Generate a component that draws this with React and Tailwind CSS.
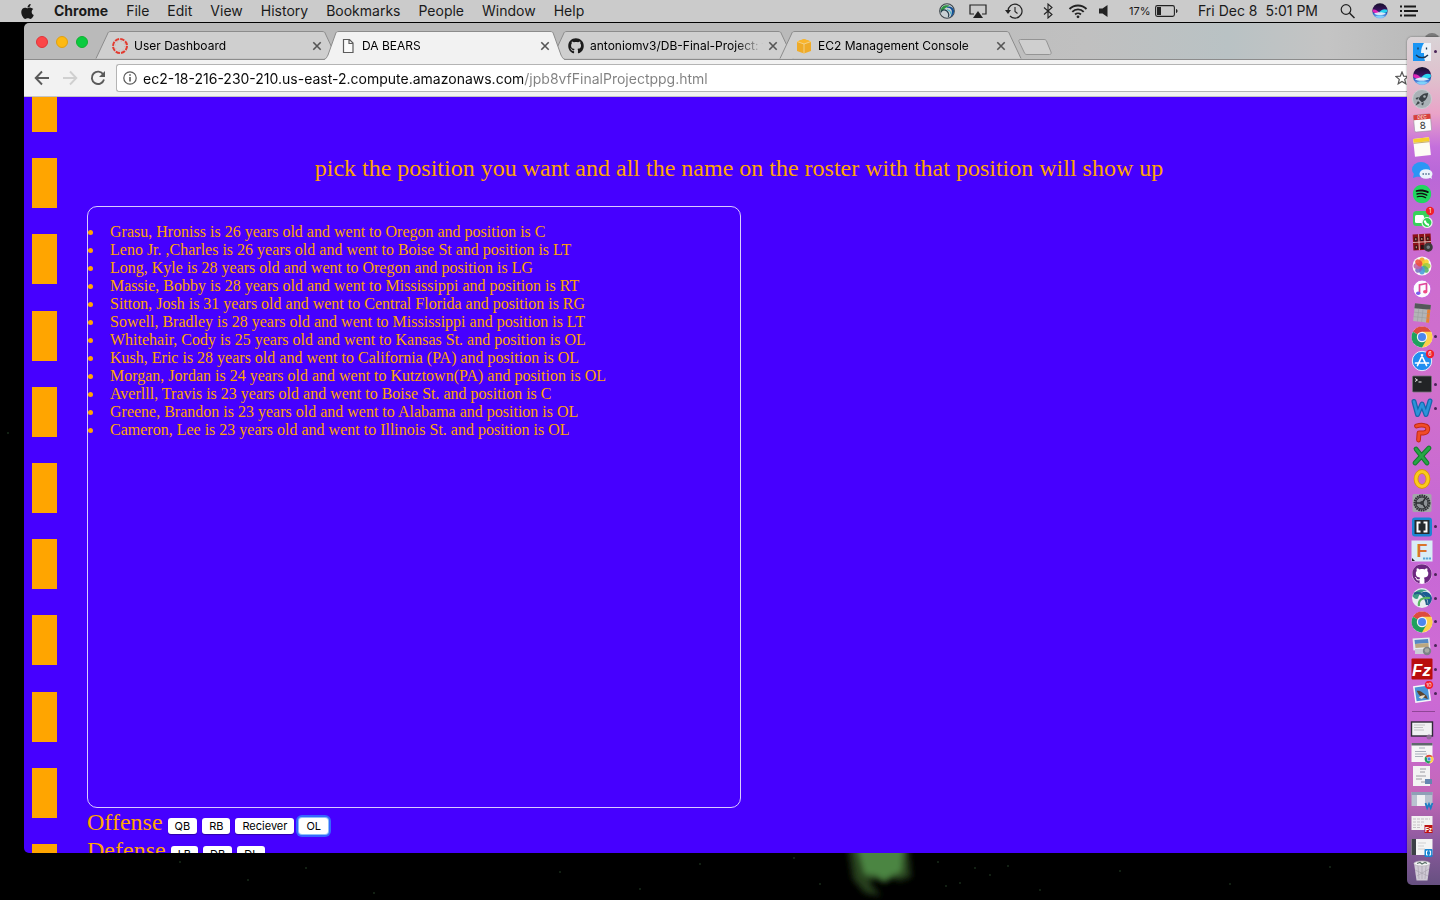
import React from "react";
import { FaApple, FaGithub, FaSpotify } from "react-icons/fa";

const menus = ["File", "Edit", "View", "History", "Bookmarks", "People", "Window", "Help"];

const roster = [
  "Grasu, Hroniss is 26 years old and went to Oregon and position is C",
  "Leno Jr. ,Charles is 26 years old and went to Boise St and position is LT",
  "Long, Kyle is 28 years old and went to Oregon and position is LG",
  "Massie, Bobby is 28 years old and went to Mississippi and position is RT",
  "Sitton, Josh is 31 years old and went to Central Florida and position is RG",
  "Sowell, Bradley is 28 years old and went to Mississippi and position is LT",
  "Whitehair, Cody is 25 years old and went to Kansas St. and position is OL",
  "Kush, Eric is 28 years old and went to California (PA) and position is OL",
  "Morgan, Jordan is 24 years old and went to Kutztown(PA) and position is OL",
  "Averlll, Travis is 23 years old and went to Boise St. and position is C",
  "Greene, Brandon is 23 years old and went to Alabama and position is OL",
  "Cameron, Lee is 23 years old and went to Illinois St. and position is OL",
];

function SiriArt() {
  return (
    <g>
      <defs>
        <linearGradient id="siriBg" x1="0" y1="0" x2="0" y2="1">
          <stop offset="0" stopColor="#15102c" />
          <stop offset=".45" stopColor="#3a1260" />
          <stop offset=".7" stopColor="#2a6fd0" />
          <stop offset="1" stopColor="#a9b8f0" />
        </linearGradient>
      </defs>
      <circle cx="12" cy="12" r="11.5" fill="url(#siriBg)" />
      <path d="M1 10c4-1 7 1 10 5-3 1-7 0-10-2z" fill="#e026b8" />
      <path d="M23 10c-5-2-9 0-12 4 4 2 9 1 12-1z" fill="#29d3ee" />
      <path d="M3 16c5-3 13-3 18 0-3 2-14 3-18 0z" fill="#e9f6ff" opacity=".9" />
      <path d="M5 20c4-2 10-2 14 0-3 3-11 3-14 0z" fill="#7fe0ff" opacity=".8" />
    </g>
  );
}

function Globe({ className }) {
  return (
    <svg viewBox="0 0 24 24" className={className}>
      <circle cx="12" cy="12" r="11" fill="#c9d0d4" stroke="#3c444a" strokeWidth="1.600" />
      <path d="M2.500 12C3 5 9 2 16 4c-3 2-6 2-8 5-2 2-2 4-5.500 3z" fill="#2c9440" />
      <path d="M11 7c7 0 9 3 8 8 0 2-1 4-2 6 4-2 6-6 5.500-10C20 5 15 4 11 7z" fill="#124f93" />
      <path d="M3 14c1-5 8-5 11 1 1 2 1 4 0 6" fill="none" stroke="#27404e" strokeWidth="1.800" />
      <path d="M12 10c3 0 6 3 6 7" fill="none" stroke="#38b0c8" strokeWidth="1.600" />
    </svg>
  );
}

function Chrome() {
  return (
    <g>
      <circle cx="12" cy="12" r="10.5" fill="#fff" />
      <path d="M12 12L2.9 6.8A10.5 10.5 0 0 1 21.1 6.8z" fill="#dd4b3e" />
      <path d="M12 12l9.1-5.2A10.5 10.5 0 0 1 12 22.5z" fill="#fdd04b" />
      <path d="M12 12v10.5A10.5 10.5 0 0 1 2.9 6.8z" fill="#1fa15d" />
      <path d="M12 6.800h9.100L16.500 14.600z" fill="#fdd04b" />
      <path d="M16.500 14.600L12 22.500 7.500 14.600z" fill="#1fa15d" />
      <circle cx="12" cy="12" r="5.200" fill="#f4f4f4" />
      <circle cx="12" cy="12" r="4" fill="#4b87ee" />
    </g>
  );
}

function Badge({ children }) {
  return (
    <g>
      <circle cx="20" cy="5" r="4.200" fill="#f0202c" />
      <text x="20" y="7" fontSize="5.500" textAnchor="middle" fill="#fff" fontFamily="Inter, sans-serif">{children}</text>
    </g>
  );
}

const petals = ["#f7a12b", "#f6d12f", "#a5cc3b", "#55b46b", "#4a9fd8", "#7d6fc4", "#c264a8", "#ee5140"];

const apps = [
  { name: "Finder", open: true, art: (
    <g>
      <rect x="3" y="3" width="18" height="18" fill="#eef3f9" />
      <path d="M3 3h11c-2 3-3 6-3 10h3c0 3 0 5 1 8H3z" fill="#1a95f4" />
      <path d="M8 7.500v2M16.500 7.500v2M6 15c3 3.500 9 3.500 12 0" fill="none" stroke="#1d3550" strokeWidth="1.300" />
    </g>) },
  { name: "Siri", art: <g transform="translate(2.500 2.500) scale(.8)"><SiriArt /></g> },
  { name: "Launchpad", art: (
    <g>
      <circle cx="12" cy="12" r="9.500" fill="#a9b1b6" stroke="#c9ced2" />
      <path d="M18 6c-5 0-8 3-9.500 6l3.500 3.500C15 14 18 11 18 6zM9 10l-3.500 1L7 13zM14 15l-1 3.500L11 17zM8 14l-2.500 4.500L10 16z" fill="#3b4247" />
      <circle cx="14.500" cy="9.500" r="1.300" fill="#a9b1b6" />
    </g>) },
  { name: "Calendar", art: (
    <g transform="rotate(-5 12 12)">
      <rect x="4" y="3.500" width="17" height="17" rx="1.500" fill="#fbfbfb" stroke="#9b8fa0" strokeWidth=".6" />
      <path d="M4 3.500h17v5H4z" fill="#d8403c" />
      <text x="12.500" y="7.700" fontSize="4.500" fill="#fff" textAnchor="middle" fontFamily="Inter, sans-serif">DEC</text>
      <text x="12.500" y="18" fontSize="10" fill="#333" textAnchor="middle" fontFamily="Inter, sans-serif">8</text>
    </g>) },
  { name: "Notes", art: (
    <g transform="rotate(-6 12 12)">
      <rect x="4" y="3" width="16" height="18" fill="#fdfcf4" />
      <path d="M4 3h16v4H4z" fill="#f6cf2d" />
      <path d="M4 7.500h16" stroke="#b99c56" strokeWidth=".8" />
    </g>) },
  { name: "Messages", art: (
    <g>
      <ellipse cx="11" cy="10.500" rx="9" ry="7.500" fill="#2b96f5" />
      <path d="M4 14l-1 5 6-2z" fill="#2b96f5" />
      <ellipse cx="16" cy="15" rx="6.500" ry="4.800" fill="#eaf3fb" />
      <path d="M19 18l3 2-1-4z" fill="#eaf3fb" />
      <path d="M12.500 15h1.500M15.300 15h1.500M18.100 15h1.500" stroke="#4c6c8c" strokeWidth="1.500" />
    </g>) },
  { name: "Spotify", art: (
    <g>
      <circle cx="12" cy="12" r="8" fill="#101010" />
      <FaSpotify x="2.500" y="2.500" width="19" height="19" size="19" color="#20d760" />
    </g>) },
  { name: "FaceTime", art: (
    <g>
      <rect x="3" y="5" width="16" height="15" rx="3.500" fill="#38d15b" />
      <rect x="5" y="9" width="9" height="8" rx="1.500" fill="#fff" />
      <circle cx="17" cy="16.500" r="5" fill="#2fcf55" stroke="#e9f7ec" strokeWidth="1.200" />
      <path d="M14.600 14.500c.5 2.500 2 4 4.400 4.500" fill="none" stroke="#fff" strokeWidth="2" />
      <Badge>1</Badge>
    </g>) },
  { name: "Photo Booth", art: (
    <g transform="rotate(-3 12 12)">
      <rect x="3" y="4" width="18" height="16" fill="#8b1117" />
      <path d="M3 12h18M9 4v16M15 4v16" stroke="#e6d0c8" strokeWidth=".8" />
      <path d="M4.500 11V7h3v4M10.500 11V7h3v4M16.500 11V7h3v4M4.500 19v-4h3v4M10.500 19v-4h3v4" fill="#2a1214" />
      <path d="M5.500 8h1v2h-1zM11.500 8h1v2h-1zM17.500 8h1v2h-1zM5.500 16h1v2h-1z" fill="#e9a98c" />
      <circle cx="18" cy="17.500" r="4.500" fill="#3a3a3c" />
      <circle cx="18" cy="17.500" r="1.800" fill="#777d85" />
    </g>) },
  { name: "Photos", art: (
    <g>
      <circle cx="12" cy="12" r="9.500" fill="#f8f8f8" />
      {petals.map((color, i) => (
        <ellipse key={color} cx="12" cy="7.500" rx="2.900" ry="4" fill={color} opacity=".9" transform={`rotate(${i * 45} 12 12)`} />
      ))}
    </g>) },
  { name: "iTunes", art: (
    <g>
      <circle cx="12" cy="12" r="9" fill="#fbfbff" stroke="#c96bd8" strokeWidth="1.200" />
      <path d="M9.500 16V8l7-1.500v8" fill="none" stroke="#e0479c" strokeWidth="1.700" />
      <ellipse cx="8.200" cy="16.300" rx="2.200" ry="1.700" fill="#7a5df0" />
      <ellipse cx="15.200" cy="14.800" rx="2.200" ry="1.700" fill="#ee4d83" />
    </g>) },
  { name: "Calculator", art: (
    <g transform="rotate(6 12 12)">
      <rect x="4" y="3" width="16" height="18" fill="#b3b4b6" />
      <path d="M4 3h16v5H4z" fill="#55575a" />
      <path d="M17 8h3v13h-3z" fill="#e88032" />
      <path d="M4 12h16M4 16.500h16M8.300 8v13M12.600 8v13" stroke="#96989b" strokeWidth=".5" />
    </g>) },
  { name: "Chrome", open: true, art: <Chrome /> },
  { name: "App Store", art: (
    <g>
      <circle cx="12" cy="12" r="9.700" fill="#218ef0" stroke="#e5effa" strokeWidth="1" />
      <path d="M12.500 6L7.500 16.500M11.500 6l5 10.500M5.500 14h13" stroke="#fff" strokeWidth="1.700" strokeLinecap="round" />
      <Badge>6</Badge>
    </g>) },
  { name: "Terminal", open: true, art: (
    <g>
      <rect x="2.500" y="4" width="19" height="16" rx="1" fill="#222426" stroke="#74757a" strokeWidth=".8" />
      <path d="M5 6.500l2.500 1.500L5 9.500M8.500 10h3" fill="none" stroke="#e8e8e8" strokeWidth="1" />
    </g>) },
  { name: "Word", open: true, art: (
    <g fill="none" strokeLinecap="round" strokeLinejoin="round">
      <path d="M4 5.500l3.500 13L12 8l4 10.500L20 5" stroke="#1766ab" strokeWidth="5" />
      <path d="M4 5.500l3.500 13L12 8l4 10.500L20 5" stroke="#2b93d9" strokeWidth="2.600" />
    </g>) },
  { name: "PowerPoint", art: (
    <g fill="none" strokeLinecap="round" strokeLinejoin="round">
      <path d="M6.500 6c3-1 6-1 8-.5 5 1 4 7-1 7.500H9l-.5 7" stroke="#c22a15" strokeWidth="4.800" />
      <path d="M6.500 6c3-1 6-1 8-.5 5 1 4 7-1 7.500H9l-.5 7" stroke="#f04c29" strokeWidth="2.800" />
    </g>) },
  { name: "Excel", art: (
    <g fill="none" strokeLinecap="round">
      <path d="M6 5l11 14M19 4L5 19" stroke="#147a2e" strokeWidth="4.800" />
      <path d="M6 5l11 14M19 4L5 19" stroke="#27a546" strokeWidth="2.800" />
    </g>) },
  { name: "Outlook", art: (
    <g fill="none">
      <ellipse cx="12" cy="12" rx="6" ry="7.500" stroke="#d9970c" strokeWidth="4.800" />
      <ellipse cx="12" cy="12" rx="6" ry="7.500" stroke="#fbcb1d" strokeWidth="3" />
    </g>) },
  { name: "System Preferences", art: (
    <g>
      <rect x="2.500" y="3" width="19" height="18" rx="1.500" fill="#a3a7aa" />
      <circle cx="12" cy="12" r="7.500" fill="#7b7f83" stroke="#303336" strokeWidth="2" strokeDasharray="1.600 .7" />
      <circle cx="12" cy="12" r="6" fill="#8d9195" stroke="#2b2d30" strokeWidth="1" />
      <path d="M12 12H5.500M12 12l3.500-5M12 12l3.500 5" stroke="#2b2d30" strokeWidth="1.400" />
      <circle cx="12" cy="12" r="2" fill="#35383b" />
    </g>) },
  { name: "Brackets", open: true, art: (
    <g>
      <rect x="2" y="2.500" width="20" height="19" rx="3" fill="#1b86d3" />
      <rect x="4.500" y="5" width="15" height="14" fill="#262a2e" />
      <path d="M10.500 7.500h-3v9h3M13.500 7.500h3v9h-3" fill="none" stroke="#fff" strokeWidth="2" />
    </g>) },
  { name: "Fusion", art: (
    <g>
      <rect x="1.500" y="1.500" width="21" height="21" fill="#d9edf6" />
      <text x="12" y="17.500" fontSize="18" fontWeight="700" textAnchor="middle" fill="#d9752a" fontFamily="Liberation Sans, sans-serif">F</text>
      <path d="M13 19.500h8" stroke="#5aa4d8" strokeWidth="2" strokeDasharray="2.200 .7" />
      <path d="M2 22v-3l3 3z" fill="#222" />
    </g>) },
  { name: "GitHub Desktop", open: true, art: (
    <g>
      <circle cx="12" cy="12" r="10" fill="#fff" />
      <FaGithub x="2" y="2" width="20" height="20" size="20" color="#6d2781" />
    </g>) },
  { name: "AnyConnect", open: true, art: (
    <g>
      <circle cx="12" cy="12" r="10" fill="#e8edf0" />
      <path d="M2.500 10C5 4 11 2 17 4.500c-4 0-8 3-9 8-2 1-4 0-5.500-2.500z" fill="#3c9f86" />
      <path d="M11 7c5-3 10 0 11 5 0 3-2 6-4 8 1-6-2-10-7-13z" fill="#1b5b93" />
      <path d="M4 8c5-3 12 1 13 11" fill="none" stroke="#225e88" strokeWidth="2.200" />
      <path d="M9 20c-1-6 3-9 11-8" fill="none" stroke="#59b463" strokeWidth="2.200" />
    </g>) },
  { name: "Chrome window", open: true, art: <Chrome /> },
  { name: "Preview", open: true, art: (
    <g>
      <rect x="3" y="4" width="17" height="12" fill="#e4eaf0" transform="rotate(-4 11 10)" />
      <path d="M4.500 6l13.500-1 .5 4-13.500 1z" fill="#5588c4" />
      <path d="M5 10l13.500-1 .3 4L5.500 14z" fill="#bba77f" />
      <rect x="5" y="15" width="12" height="5" fill="#c9ced6" />
      <circle cx="17" cy="17" r="4.200" fill="#7b8288" />
      <circle cx="17" cy="16.500" r="2.300" fill="#a7aba3" />
    </g>) },
  { name: "FileZilla", open: true, art: (
    <g>
      <rect x="1.500" y="1.500" width="21" height="21" rx="1" fill="#b90d0d" />
      <text x="11.500" y="18.500" fontSize="17" fontWeight="700" fontStyle="italic" textAnchor="middle" fill="#fff" fontFamily="Liberation Sans, sans-serif">Fz</text>
    </g>) },
  { name: "Mail", open: true, art: (
    <g transform="rotate(-8 12 12)">
      <rect x="4" y="4" width="16" height="17" fill="#f4f6f8" />
      <rect x="5.500" y="5.500" width="13" height="14" fill="#4b94d6" />
      <path d="M7 9c4 0 5 2 9 6l1 4-5-3c-3-1-4-4-5-7z" fill="#5d452e" />
      <path d="M8 16c3-2 5-2 7-1l-4 3z" fill="#e9dfcb" />
      <Badge>10</Badge>
    </g>) },
];

const windows = [
  { name: "Document window", art: (
    <g>
      <rect x="1.500" y="5" width="21" height="14" fill="#f0f0f2" stroke="#2f2b38" strokeWidth="1.400" />
      <path d="M4 8h11M4 10.500h9M4 13h10" stroke="#b6b6ba" strokeWidth=".8" />
      <circle cx="19" cy="20" r="2.500" fill="#8f6d98" />
    </g>) },
  { name: "Browser window", art: (
    <g>
      <rect x="1.500" y="2" width="21" height="19" fill="#f5f5f6" />
      <path d="M1.500 2h21v2.500h-21z" fill="#5f686c" />
      <path d="M9 7h6M5 10.500h11M5 13h12M5 15.500h8" stroke="#a8b0bc" strokeWidth="1" />
      <g transform="translate(14 13) scale(.42)"><Chrome /></g>
    </g>) },
  { name: "Page window", art: (
    <g>
      <rect x="3" y="2" width="17" height="20" fill="#f3f3f3" />
      <path d="M10 5h6M10 8h5M6 12h10M6 15h6M11 18h5" stroke="#9c9ca2" strokeWidth="1" />
      <rect x="15" y="15" width="7" height="5" fill="#6586b0" />
    </g>) },
  { name: "Word window", art: (
    <g>
      <rect x="1.500" y="4" width="21" height="14" fill="#b9c2d0" />
      <path d="M1.500 4h21v3h-21z" fill="#8fa0b6" />
      <rect x="7" y="7" width="8" height="11" fill="#eff0f2" />
      <path d="M15.500 15l1.700 5 1.800-4 1.700 4 1.800-5" fill="none" stroke="#1e7cc4" strokeWidth="1.800" />
    </g>) },
  { name: "FileZilla window", art: (
    <g>
      <rect x="1.500" y="4" width="21" height="14" fill="#f2f1f1" />
      <path d="M3 7h17M3 10h12M3 13h9M3 15.500h8" stroke="#c5bfc4" strokeWidth="1" strokeDasharray="3 1" />
      <rect x="14.500" y="13" width="8" height="8" fill="#bd1313" />
      <text x="18.500" y="19.500" fontSize="6.500" fontWeight="700" textAnchor="middle" fill="#fff" fontFamily="Liberation Sans, sans-serif">Fz</text>
    </g>) },
  { name: "Brackets window", art: (
    <g>
      <rect x="1.500" y="3" width="21" height="16" fill="#f4f4f4" />
      <path d="M1.500 3H6v16H1.500z" fill="#3c4045" />
      <path d="M8 7h8M8 10h6M8 13h7" stroke="#d0d0d2" strokeWidth="1" />
      <rect x="14.500" y="13" width="8" height="8" rx="1" fill="#1b86d3" />
      <path d="M17.800 15h-1.300v4h1.300M19.300 15h1.300v4h-1.300" fill="none" stroke="#fff" strokeWidth="1" />
    </g>) },
  { name: "Trash", art: (
    <g>
      <path d="M4 4h16l-2.500 17.500h-11z" fill="#d8d5dc" opacity=".92" />
      <path d="M8 7l1 13M12 7v13M16 7l-1 13M5 11l13 6M19 10L7 17" stroke="#aaa5b0" strokeWidth=".7" />
      <ellipse cx="12" cy="4.500" rx="8" ry="2.500" fill="#f4f4f6" stroke="#b4b0b8" strokeWidth=".7" />
      <path d="M7 4.500l3-1 2 1.500 3-1.500 2 1" fill="none" stroke="#5b7268" strokeWidth="1.200" />
    </g>) },
];

function DockItem({ item }) {
  return (
    <button type="button" aria-label={item.name} className="flex min-h-0 flex-1 items-center pl-[3px]">
      <svg viewBox="0 0 24 24" className="size-6 flex-none">{item.art}</svg>
      {item.open && <span className="size-[3px] flex-none rounded-full bg-[#4a2358]" />}
    </button>
  );
}

function Dock() {
  return (
    <nav
      aria-label="Dock"
      className="absolute top-[15px] right-0 bottom-[15px] flex w-[33px] flex-col rounded-l-[5px] bg-[linear-gradient(180deg,#d9d3d6_0%,#dfc0cd_5%,#eaa3c8_9%,#c46fdc_13%,#b968d8_16%,#cc6cd0_26%,#d070cc_42%,#c567d6_60%,#d06cd4_74%,#c768d4_82%,#c568b8_89%,#8c5a9e_95%,#665080_100%)] pt-[3px] pb-[2px] shadow-[0_0_2px_rgba(0,0,0,0.5)]"
    >
      {apps.map((item) => <DockItem key={item.name} item={item} />)}
      <div className="flex h-3 flex-none items-center px-[5px]">
        <span className="h-px flex-1 bg-[#8f4696]" />
      </div>
      {windows.map((item) => <DockItem key={item.name} item={item} />)}
    </nav>
  );
}

function MenuBar() {
  return (
    <header className="flex h-[22px] flex-none items-center bg-[#cbcbcb] pr-[22px] pl-[19px] text-[14px] leading-[22px] whitespace-nowrap text-[#1a1a1a]">
      <FaApple className="size-[17px] flex-none" />
      <nav aria-label="Menu" className="ml-[18px] flex gap-[18px]">
        <button type="button" className="font-bold">Chrome</button>
        {menus.map((m) => <button key={m} type="button">{m}</button>)}
      </nav>
      <div className="ml-auto flex items-center">
        <Globe className="size-4" />
        <svg viewBox="0 0 18 16" className="ml-[14px] h-4 w-[18px]">
          <path d="M5 11H1V2h16v9h-4" fill="none" stroke="#222" strokeWidth="1.200" />
          <path d="M9 8l5 7H4z" fill="#222" />
        </svg>
        <svg viewBox="0 0 18 16" className="ml-[18px] h-4 w-[18px]">
          <path d="M3 8a7 7 0 1 1 2 5" fill="none" stroke="#222" strokeWidth="1.200" />
          <path d="M0 7h6l-3 4z" fill="#222" />
          <path d="M10 4v4.500l2.500 2" fill="none" stroke="#222" strokeWidth="1.100" />
        </svg>
        <svg viewBox="0 0 10 16" className="ml-5 h-4 w-[10px]">
          <path d="M1 4.500l8 7L5 15V1l4 3.500-8 7" fill="none" stroke="#222" strokeWidth="1.100" />
        </svg>
        <svg viewBox="0 0 20 16" className="ml-[15px] h-4 w-5">
          <path d="M1.500 6a12 12 0 0 1 17 0M4.300 8.800a8 8 0 0 1 11.400 0M7.100 11.500a4.200 4.200 0 0 1 5.800 0" fill="none" stroke="#222" strokeWidth="1.900" />
          <circle cx="10" cy="13.800" r="1.400" fill="#222" />
        </svg>
        <svg viewBox="0 0 10 16" className="ml-[11px] h-4 w-[10px]">
          <path d="M0 5.500h3.500L8.500 2v12l-5-3.500H0z" fill="#222" />
        </svg>
        <span className="ml-5 w-[22px] text-[11px]">17%</span>
        <svg viewBox="0 0 23 12" className="ml-1 h-3 w-[23px]">
          <rect x=".6" y=".6" width="18.800" height="10.800" rx="1.800" fill="none" stroke="#222" strokeWidth="1.100" />
          <rect x="2" y="2" width="4" height="8" fill="#222" />
          <path d="M21 4c2 .5 2 3.500 0 4z" fill="#222" />
        </svg>
        <span className="ml-5 w-[120px]">Fri Dec 8&nbsp; 5:01 PM</span>
        <svg viewBox="0 0 16 16" className="ml-[22px] size-4">
          <circle cx="6" cy="6.500" r="4.800" fill="none" stroke="#222" strokeWidth="1.200" />
          <path d="M9.500 10l5 5" stroke="#222" strokeWidth="1.500" />
        </svg>
        <svg viewBox="0 0 24 24" className="ml-4 size-4"><SiriArt /></svg>
        <svg viewBox="0 0 18 12" className="ml-3 h-3 w-[18px]">
          <path d="M0 1.500h2M0 6h2M0 10.500h2M4 1.500h12M4 6h14M4 10.500h12" stroke="#1a1a1a" strokeWidth="1.900" />
        </svg>
      </div>
    </header>
  );
}

function CanvasIcon() {
  return (
    <svg viewBox="0 0 16 16" className="size-4 flex-none">
      <circle cx="8" cy="8" r="7" fill="none" stroke="#e23b30" strokeWidth="2" strokeDasharray="4.400 1.100" />
      <circle cx="8" cy="8" r="4.800" fill="none" stroke="#e58a84" strokeWidth=".6" strokeDasharray="1 2.800" />
    </svg>
  );
}

function PageIcon() {
  return (
    <svg viewBox="0 0 16 16" className="size-4 flex-none">
      <path d="M3.500 1.500h6l3.500 3.500v9.500H3.500zM9 1.500V5.500h4" fill="#fafafa" stroke="#5c5c5c" strokeWidth="1.200" />
    </svg>
  );
}

function BoxIcon() {
  return (
    <svg viewBox="0 0 16 16" className="size-4 flex-none">
      <path d="M1 3.500L8 1l7 2.500v9.500l-7 2.500-7-2.500z" fill="#efab28" />
      <path d="M1 3.500L8 6l7-2.500L8 1z" fill="#f9b52c" />
      <path d="M8 6v9.500M1 3.500L8 6l7-2.500" fill="none" stroke="#f3d9a0" strokeWidth=".8" />
    </svg>
  );
}

const tabs = [
  { title: "User Dashboard", icon: <CanvasIcon /> },
  { title: "DA BEARS", icon: <PageIcon />, active: true },
  { title: "antoniomv3/DB-Final-Project: f", icon: <FaGithub className="size-4 flex-none text-[#1b1b1b]" /> },
  { title: "EC2 Management Console", icon: <BoxIcon /> },
];

function Tab({ tab }) {
  return (
    <div className={`relative -mr-[13px] flex h-7 w-[241px] flex-none items-center pt-[2px] pr-[14px] pl-4 ${tab.active ? "z-10" : ""}`}>
      <svg viewBox="0 0 241 28" preserveAspectRatio="none" className="absolute inset-0 size-full overflow-visible">
        <path
          d={tab.active ? "M0 29C2 28 3 26 4 24L11.500 3C12 1 13 .5 15 .5H226c2 0 3 .5 3.500 2.500L237 24c1 2 2 4 4 5z" : "M0 27.500L11.500 3C12 1 13 .5 15 .5H226c2 0 3 .5 3.500 2.500L241 27.500"}
          fill={tab.active ? "#f2f2f2" : "#cfcfcf"}
        />
        <path
          d={tab.active ? "M0 28.500C2 28 3 26 4 24L11.500 3C12 1 13 .5 15 .5H226c2 0 3 .5 3.500 2.500L237 24c1 2 2 4 4 4.500" : "M0 27.500L11.500 3C12 1 13 .5 15 .5H226c2 0 3 .5 3.500 2.500L241 27.500"}
          fill="none"
          stroke="#8c8c8c"
        />
      </svg>
      <button type="button" className="relative flex min-w-0 flex-1 items-center gap-[6px] text-left text-[12px] leading-4">
        {tab.icon}
        <span className="flex-1 overflow-hidden whitespace-nowrap [mask-image:linear-gradient(90deg,#000_82%,transparent_98%)]">{tab.title}</span>
      </button>
      <button type="button" aria-label={`Close ${tab.title}`} className="relative flex size-3 items-center justify-center">
        <svg viewBox="0 0 10 10" className="size-[10px]">
          <path d="M1.300 1.300l7.400 7.400M8.700 1.300L1.300 8.700" stroke="#555" strokeWidth="1.600" />
        </svg>
      </button>
    </div>
  );
}

function Toolbar() {
  return (
    <div className="flex h-[37px] flex-none items-center gap-3 border-b border-[#c4c4c4] bg-[#f2f2f2] pl-[10px]">
      <button type="button" aria-label="Back">
        <svg viewBox="0 0 16 16" className="size-4">
          <path d="M15 8H2M8 1.500L1.700 8 8 14.500" fill="none" stroke="#5a5a5a" strokeWidth="1.900" />
        </svg>
      </button>
      <button type="button" aria-label="Forward">
        <svg viewBox="0 0 16 16" className="size-4">
          <path d="M1 8h13M8 1.500L14.300 8 8 14.500" fill="none" stroke="#d0d0d0" strokeWidth="1.900" />
        </svg>
      </button>
      <button type="button" aria-label="Reload">
        <svg viewBox="0 0 16 16" className="size-4">
          <path d="M13.300 4.500A6.200 6.200 0 1 0 14 9.500" fill="none" stroke="#5a5a5a" strokeWidth="1.900" />
          <path d="M15 1v6H9z" fill="#5a5a5a" />
        </svg>
      </button>
      <div className="-ml-[2px] flex h-7 min-w-0 flex-1 items-center rounded-l-[3px] border border-r-0 border-[#b4b4b4] bg-white pr-[31px] pl-[6px]">
        <svg viewBox="0 0 14 14" className="size-[14px] flex-none">
          <circle cx="7" cy="7" r="6.200" fill="none" stroke="#5a5a5a" strokeWidth="1.200" />
          <path d="M7 6v4.500M7 3.300v1.500" stroke="#5a5a5a" strokeWidth="1.600" />
        </svg>
        <input
          type="text"
          aria-label="Address"
          defaultValue="ec2-18-216-230-210.us-east-2.compute.amazonaws.com/jpb8vfFinalProjectppg.html"
          className="ml-[6px] h-6 min-w-0 flex-1 bg-[linear-gradient(90deg,#0a0a0a_380px,#808080_380px)] bg-clip-text text-[14px] text-transparent outline-none"
        />
        <button type="button" aria-label="Bookmark">
          <svg viewBox="0 0 14 14" className="size-[14px]">
            <path d="M7 1l1.700 4.200 4.500.3-3.500 2.900 1.100 4.400L7 10.400l-3.800 2.400 1.100-4.400L.8 5.500l4.500-.3z" fill="none" stroke="#555" strokeWidth="1.200" />
          </svg>
        </button>
      </div>
    </div>
  );
}

function PositionButton({ label, focused }) {
  return (
    <button
      type="button"
      className={`h-4 rounded-[3px] bg-white px-[7px] font-[Inter,sans-serif] text-[11px] leading-4 text-black ${focused ? "shadow-[0_0_0_1px_#8fc0f8,0_0_0_3px_#3566ff]" : "shadow-[0_1px_1px_rgba(0,0,0,0.35)]"}`}
    >
      {label}
    </button>
  );
}

function PositionRow({ title, labels, focused }) {
  return (
    <div className="flex h-7 items-baseline gap-[5px]">
      <h2 className="text-2xl leading-7">{title}</h2>
      {labels.map((label) => <PositionButton key={label} label={label} focused={label === focused} />)}
    </div>
  );
}

function Page() {
  return (
    <div className="flex min-h-0 flex-1 overflow-hidden rounded-bl-[5px] bg-[#4600ff] pl-2 font-['Liberation_Serif',serif] text-[#ffa500]">
      <div className="flex w-[25px] flex-none flex-col justify-between">
        <span className="h-[35px] bg-[#ffa500]" />
        {Array.from({ length: 9 }, (_, i) => <span key={i} className="h-[50px] bg-[#ffa500]" />)}
        <span className="h-[9px] bg-[#ffa500]" />
      </div>
      <main className="min-w-0 flex-1 pt-[57px] pr-[49px] pl-[30px]">
        <h1 className="text-center text-2xl leading-7">
          pick the position you want and all the name on the roster with that position will show up
        </h1>
        <section className="mt-6 box-content h-[600px] w-1/2 rounded-[10px] border border-white/80">
          <ul className="list-inside list-disc pt-4 text-base leading-[18px]">
            {roster.map((line) => <li key={line}>{line}</li>)}
          </ul>
        </section>
        <PositionRow title="Offense" labels={["QB", "RB", "Reciever", "OL"]} focused="OL" />
        <PositionRow title="Defense" labels={["LB", "DB", "DL"]} />
      </main>
    </div>
  );
}

function Browser() {
  return (
    <div className="flex min-h-0 min-w-0 flex-1 flex-col">
      <div className="flex h-[37px] flex-none items-end rounded-tl-[5px] border-b border-[#8c8c8c] bg-[linear-gradient(90deg,#bababa_0%,#bababa_55%,#c0c0c0_75%,#b9c2c4_85%,#c4c4c4_92%,#b8b8b8_100%)] pl-3">
        <div className="flex gap-2 self-center pt-[2px] pr-2">
          <button type="button" aria-label="Close window" className="size-3 rounded-full border border-[#e0343a] bg-[#fc4648]" />
          <button type="button" aria-label="Minimize window" className="size-3 rounded-full border border-[#e0a010] bg-[#fdb912]" />
          <button type="button" aria-label="Zoom window" className="size-3 rounded-full border border-[#12b030] bg-[#0acb3f]" />
        </div>
        {tabs.map((tab) => <Tab key={tab.title} tab={tab} />)}
        <button type="button" aria-label="New tab" className="mb-1 ml-[10px]">
          <svg viewBox="0 0 34 16" className="h-4 w-[34px]">
            <path d="M2.500.5H26c1.500 0 2 .5 2.500 1.500l4.500 11c.5 1.500 0 2.500-1.500 2.500H9c-1.500 0-2-.5-2.500-1.500L1 2.500C.7 1.200 1 .5 2.500.5z" fill="#cfcfcf" stroke="#949494" />
          </svg>
        </button>
        <button type="button" aria-label="Profile" className="ml-auto size-4 self-center rounded-full bg-[#7a7a7a]" />
      </div>
      <Toolbar />
      <Page />
    </div>
  );
}

const stars = [
  [8, 433], [180, 862], [248, 880], [306, 868], [374, 893], [560, 872], [640, 889], [700, 864], [794, 858], [820, 884],
  [938, 862], [946, 886], [960, 883], [975, 868], [990, 875], [1008, 866], [1040, 890], [1120, 871], [1230, 884], [1330, 867],
];

function Wallpaper() {
  return (
    <svg viewBox="0 0 1440 900" preserveAspectRatio="none" className="absolute inset-0 size-full">
      <defs>
        <filter id="soft" x="-30%" y="-30%" width="160%" height="160%">
          <feGaussianBlur stdDeviation="3" />
        </filter>
      </defs>
      <rect width="1440" height="900" fill="#000" />
      <path d="M848 845h60l3 32-12 4-8-4-6 6-8-5-8 4 12 14-16-3-12-14z" fill="#25401d" filter="url(#soft)" />
      <path d="M856 845h48l-2 28-8 2-10 6-8-5-12-1z" fill="#4c8543" filter="url(#soft)" />
      {stars.map(([x, y]) => <circle key={`${x}-${y}`} cx={x} cy={y} r=".8" fill="#2b4a2c" />)}
    </svg>
  );
}

export default function App() {
  return (
    <div className="relative h-screen overflow-hidden bg-black font-[Inter,sans-serif] text-black [&_button]:cursor-default">
      <Wallpaper />
      <div className="relative flex h-full flex-col">
        <MenuBar />
        <div className="relative flex min-h-0 flex-1 pt-px pb-[47px] pl-6">
          <Browser />
          <Dock />
        </div>
      </div>
    </div>
  );
}
